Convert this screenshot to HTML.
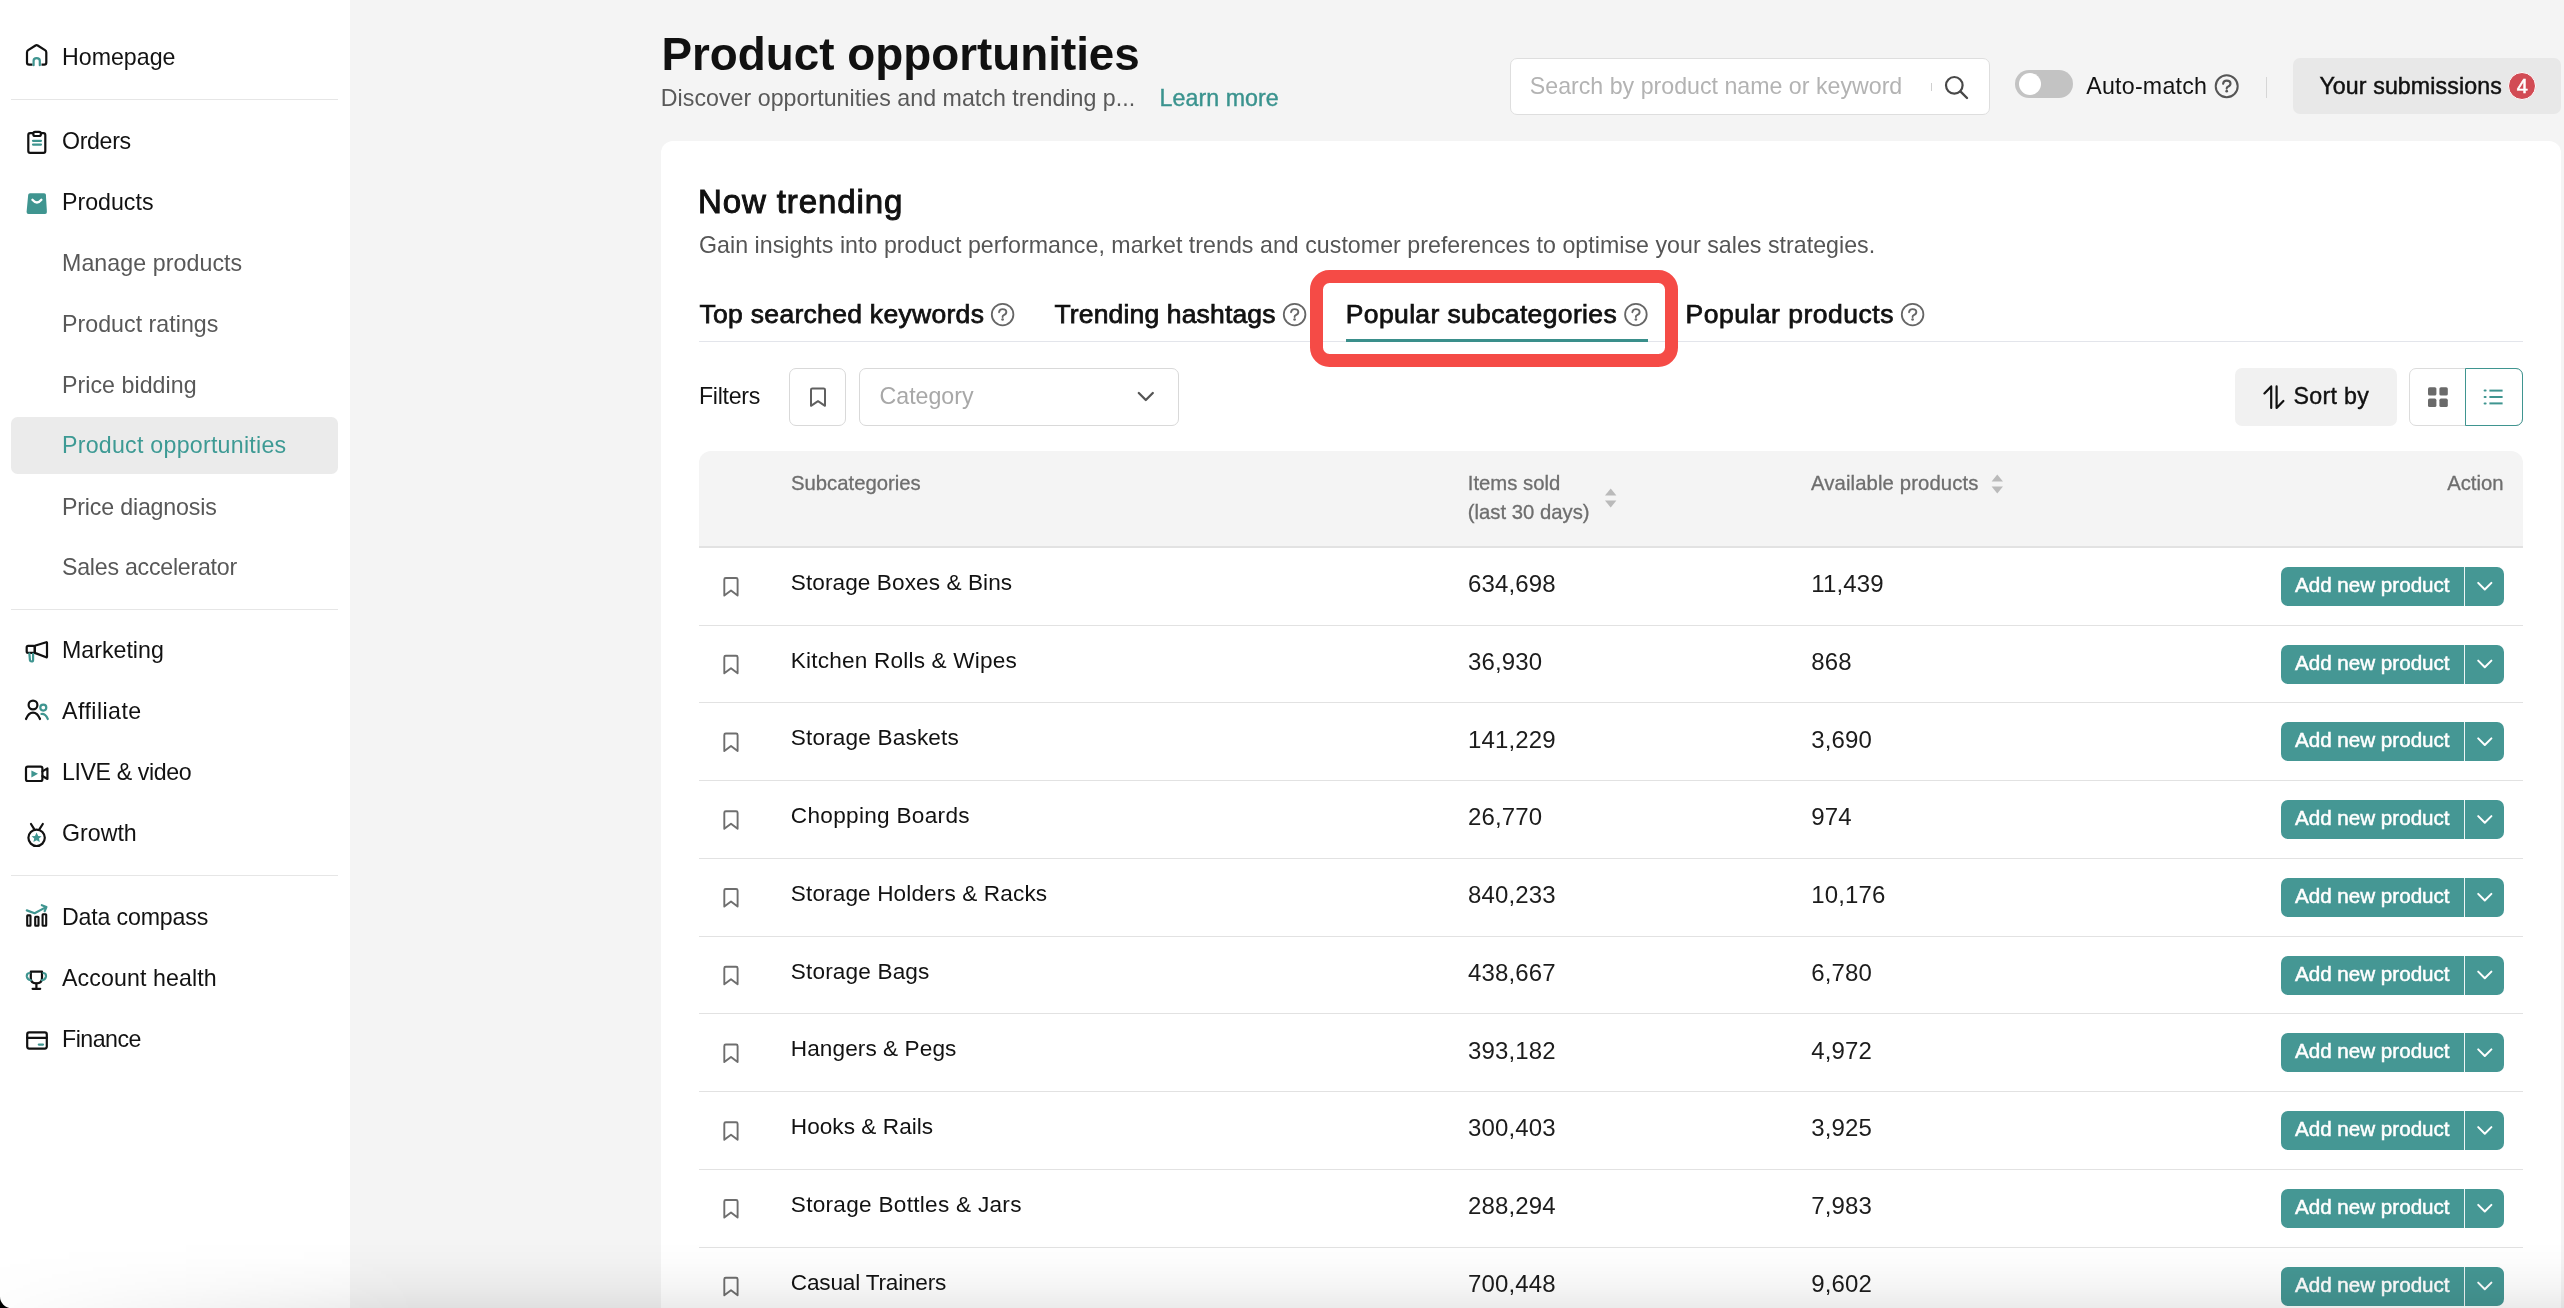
<!DOCTYPE html>
<html><head><meta charset="utf-8"><title>Product opportunities</title>
<style>
html,body{margin:0;padding:0;}
body{width:2564px;height:1308px;overflow:hidden;position:relative;background:#f4f4f4;font-family:"Liberation Sans",sans-serif;}
.t{position:absolute;white-space:nowrap;}
body>div.t, body>div.r{}
.wrap{position:absolute;left:0;top:0;width:2564px;height:1308px;will-change:transform;}
.r{position:absolute;}
svg.ov{position:absolute;left:0;top:0;width:2564px;height:1308px;pointer-events:none;}
.shade{position:absolute;left:0;top:1242px;width:2564px;height:66px;pointer-events:none;
 background:linear-gradient(to bottom, rgba(0,0,0,0) 0%, rgba(0,0,0,0.012) 30%, rgba(0,0,0,0.04) 68%, rgba(0,0,0,0.08) 100%);
 -webkit-mask-image:linear-gradient(to right, rgba(0,0,0,0.1) 0px, rgba(0,0,0,1) 420px);}
</style></head>
<body>
<div class="wrap"><div class="r" style="left:0px;top:0px;width:350.00px;height:1308.00px;background:#fff;"></div>
<div class="r" style="left:11px;top:98.5px;width:327.00px;height:1.60px;background:#e6e6e6;"></div>
<div class="r" style="left:11px;top:608.5px;width:327.00px;height:1.60px;background:#e6e6e6;"></div>
<div class="r" style="left:11px;top:874.5px;width:327.00px;height:1.60px;background:#e6e6e6;"></div>
<div class="r" style="left:11px;top:416.8px;width:327.00px;height:57.10px;background:#ebebeb;border-radius:6.5px;"></div>
<div class="t" style="left:62px;top:46.16px;font-size:23.2px;line-height:23.2px;color:#121212;font-weight:400;">Homepage</div>
<div class="t" style="left:62px;top:130.16px;font-size:23.2px;line-height:23.2px;color:#121212;font-weight:400;letter-spacing:-0.35px;">Orders</div>
<div class="t" style="left:62px;top:191.16px;font-size:23.2px;line-height:23.2px;color:#121212;font-weight:400;">Products</div>
<div class="t" style="left:62px;top:252.16px;font-size:23.2px;line-height:23.2px;color:#585858;font-weight:400;letter-spacing:0.07px;">Manage products</div>
<div class="t" style="left:62px;top:312.66px;font-size:23.2px;line-height:23.2px;color:#585858;font-weight:400;letter-spacing:0.03px;">Product ratings</div>
<div class="t" style="left:62px;top:373.66px;font-size:23.2px;line-height:23.2px;color:#585858;font-weight:400;letter-spacing:0.04px;">Price bidding</div>
<div class="t" style="left:62px;top:433.76px;font-size:23.2px;line-height:23.2px;color:#3d9a94;font-weight:400;letter-spacing:0.25px;">Product opportunities</div>
<div class="t" style="left:62px;top:495.66px;font-size:23.2px;line-height:23.2px;color:#585858;font-weight:400;letter-spacing:-0.18px;">Price diagnosis</div>
<div class="t" style="left:62px;top:556.16px;font-size:23.2px;line-height:23.2px;color:#585858;font-weight:400;letter-spacing:-0.25px;">Sales accelerator</div>
<div class="t" style="left:62px;top:639.16px;font-size:23.2px;line-height:23.2px;color:#121212;font-weight:400;">Marketing</div>
<div class="t" style="left:62px;top:700.16px;font-size:23.2px;line-height:23.2px;color:#121212;font-weight:400;letter-spacing:0.45px;">Affiliate</div>
<div class="t" style="left:62px;top:761.16px;font-size:23.2px;line-height:23.2px;color:#121212;font-weight:400;letter-spacing:-0.4px;">LIVE &amp; video</div>
<div class="t" style="left:62px;top:822.16px;font-size:23.2px;line-height:23.2px;color:#121212;font-weight:400;">Growth</div>
<div class="t" style="left:62px;top:906.16px;font-size:23.2px;line-height:23.2px;color:#121212;font-weight:400;letter-spacing:-0.18px;">Data compass</div>
<div class="t" style="left:62px;top:967.16px;font-size:23.2px;line-height:23.2px;color:#121212;font-weight:400;letter-spacing:0.1px;">Account health</div>
<div class="t" style="left:62px;top:1027.76px;font-size:23.2px;line-height:23.2px;color:#121212;font-weight:400;letter-spacing:-0.5px;">Finance</div>
<div class="t" style="left:661.5px;top:32.02px;font-size:45.8px;line-height:45.8px;color:#111;font-weight:700;">Product opportunities</div>
<div class="t" style="left:660.8px;top:86.96px;font-size:23.2px;line-height:23.2px;color:#595959;font-weight:400;letter-spacing:0.03px;">Discover opportunities and match trending p...</div>
<div class="t" style="left:1159.6px;top:86.96px;font-size:23.2px;line-height:23.2px;color:#3a938e;font-weight:400;-webkit-text-stroke:0.4px #3a938e;letter-spacing:0.05px;">Learn more</div>
<div class="r" style="left:1510.4px;top:58.3px;width:479.90px;height:56.30px;background:#fff;border:1.5px solid #dedede;border-radius:7px;box-sizing:border-box;"></div>
<div class="t" style="left:1529.8px;top:74.96px;font-size:23.2px;line-height:23.2px;color:#b3b3b3;font-weight:400;">Search by product name or keyword</div>
<div class="r" style="left:1930.5px;top:83px;width:1.10px;height:8.00px;background:#cfcfcf;"></div>
<div class="r" style="left:2015px;top:70.2px;width:57.80px;height:27.60px;background:#c3c3c3;border-radius:14px;"></div>
<div class="r" style="left:2018.6px;top:73.2px;width:22.00px;height:22.00px;background:#fff;border-radius:50%;"></div>
<div class="t" style="left:2086.2px;top:74.96px;font-size:23.2px;line-height:23.2px;color:#121212;font-weight:400;letter-spacing:0.25px;">Auto-match</div>
<div class="r" style="left:2265.8px;top:76.5px;width:1.40px;height:21.50px;background:#d6d6d6;"></div>
<div class="r" style="left:2293px;top:58.3px;width:268.00px;height:55.80px;background:#e8e8e8;border-radius:7px;"></div>
<div class="t" style="left:2319.4px;top:74.76px;font-size:23.2px;line-height:23.2px;color:#111;font-weight:400;-webkit-text-stroke:0.45px #111;letter-spacing:0.1px;">Your submissions</div>
<div class="r" style="left:2508px;top:72.3px;width:28.00px;height:28.00px;background:#d24b54;border-radius:50%;border:1.6px solid #fff;box-sizing:border-box;"></div>
<div class="t" style="left:2522.2px;top:76.27px;font-size:20px;line-height:20px;color:#fff;font-weight:0;-webkit-text-stroke:0.5px #fff;transform:translateX(-50%);">4</div>
<div class="r" style="left:661px;top:141px;width:1900.00px;height:1259.00px;background:#fff;border-radius:12px 12px 0 0;"></div>
<div class="t" style="left:698px;top:184.86px;font-size:33px;line-height:33px;color:#111;font-weight:400;-webkit-text-stroke:1.0px #111;letter-spacing:0.9px;">Now trending</div>
<div class="t" style="left:699px;top:234.06px;font-size:23.2px;line-height:23.2px;color:#555;font-weight:400;letter-spacing:0.03px;">Gain insights into product performance, market trends and customer preferences to optimise your sales strategies.</div>
<div class="r" style="left:699px;top:341px;width:1823.60px;height:1.10px;background:#e3e5eb;"></div>
<div class="t" style="left:699.5px;top:301.36px;font-size:26.5px;line-height:26.5px;color:#111;font-weight:400;-webkit-text-stroke:0.75px #111;letter-spacing:0.3px;">Top searched keywords</div>
<div class="t" style="left:1054.5px;top:301.36px;font-size:26.5px;line-height:26.5px;color:#111;font-weight:400;-webkit-text-stroke:0.75px #111;letter-spacing:0.15px;">Trending hashtags</div>
<div class="t" style="left:1345.8px;top:301.36px;font-size:26.5px;line-height:26.5px;color:#111;font-weight:400;-webkit-text-stroke:0.75px #111;letter-spacing:0.36px;">Popular subcategories</div>
<div class="t" style="left:1685.6px;top:301.36px;font-size:26.5px;line-height:26.5px;color:#111;font-weight:400;-webkit-text-stroke:0.75px #111;letter-spacing:0.5px;">Popular products</div>
<div class="r" style="left:1345.8px;top:339.1px;width:302.20px;height:2.80px;background:#3a8f8b;"></div>
<div class="r" style="left:1309.5px;top:270.3px;width:368.20px;height:97.10px;border:13px solid #f54b46;border-radius:19.5px;box-sizing:border-box;"></div>
<div class="t" style="left:699px;top:385.26px;font-size:23.2px;line-height:23.2px;color:#121212;font-weight:400;letter-spacing:-0.3px;">Filters</div>
<div class="r" style="left:789.2px;top:368.2px;width:56.60px;height:57.60px;border:1.5px solid #d9d9d9;border-radius:7px;box-sizing:border-box;"></div>
<div class="r" style="left:859.3px;top:368.2px;width:319.70px;height:57.60px;border:1.5px solid #d9d9d9;border-radius:7px;box-sizing:border-box;"></div>
<div class="t" style="left:879.5px;top:385.26px;font-size:23.2px;line-height:23.2px;color:#a8a8a8;font-weight:400;">Category</div>
<div class="r" style="left:2235px;top:368.3px;width:161.80px;height:57.50px;background:#f1f1f1;border-radius:7px;"></div>
<div class="t" style="left:2293.5px;top:385.06px;font-size:23.2px;line-height:23.2px;color:#111;font-weight:400;-webkit-text-stroke:0.4px #111;letter-spacing:0.3px;">Sort by</div>
<div class="r" style="left:2409.4px;top:368.3px;width:113.20px;height:57.50px;border:1.5px solid #dcdcdc;border-radius:7px;box-sizing:border-box;"></div>
<div class="r" style="left:2465.3px;top:368.3px;width:57.30px;height:57.50px;border:1.5px solid #3f9590;border-radius:0 7px 7px 0;box-sizing:border-box;"></div>
<div class="r" style="left:699px;top:451px;width:1823.60px;height:96.40px;background:#f4f4f4;border-radius:12px 12px 0 0;"></div>
<div class="r" style="left:699px;top:546.4px;width:1823.60px;height:1.60px;background:#e2e2e2;"></div>
<div class="t" style="left:791px;top:472.81px;font-size:20.3px;line-height:20.3px;color:#6e6e6e;font-weight:400;-webkit-text-stroke:0.3px #6e6e6e;">Subcategories</div>
<div class="t" style="left:1467.8px;top:472.81px;font-size:20.3px;line-height:20.3px;color:#6e6e6e;font-weight:400;-webkit-text-stroke:0.3px #6e6e6e;">Items sold</div>
<div class="t" style="left:1467.8px;top:502.21px;font-size:20.3px;line-height:20.3px;color:#6e6e6e;font-weight:400;-webkit-text-stroke:0.3px #6e6e6e;">(last 30 days)</div>
<div class="t" style="left:1811px;top:472.81px;font-size:20.3px;line-height:20.3px;color:#6e6e6e;font-weight:400;-webkit-text-stroke:0.3px #6e6e6e;letter-spacing:0.12px;">Available products</div>
<div class="t" style="right:60.5px;top:472.81px;font-size:20.3px;line-height:20.3px;color:#6e6e6e;font-weight:400;-webkit-text-stroke:0.3px #6e6e6e;">Action</div>
<div class="r" style="left:699px;top:624.65px;width:1823.60px;height:1.10px;background:#e2e2e2;"></div>
<div class="t" style="left:790.8px;top:571.96px;font-size:22.6px;line-height:22.6px;color:#121212;font-weight:400;letter-spacing:0.08px;">Storage Boxes &amp; Bins</div>
<div class="t" style="left:1468px;top:572.08px;font-size:24px;line-height:24px;color:#1c1c1c;font-weight:400;letter-spacing:0.15px;">634,698</div>
<div class="t" style="left:1811.2px;top:572.08px;font-size:24px;line-height:24px;color:#1c1c1c;font-weight:400;letter-spacing:0.15px;">11,439</div>
<div class="r" style="left:2281px;top:566.9px;width:223.00px;height:39.00px;background:#459794;border-radius:7px;"></div>
<div class="r" style="left:2463.8px;top:566.9px;width:1.40px;height:39.00px;background:#fff;opacity:0.9;"></div>
<div class="t" style="left:2295px;top:574.86px;font-size:20.6px;line-height:20.6px;color:#fff;font-weight:400;-webkit-text-stroke:0.5px #fff;">Add new product</div>
<div class="r" style="left:699px;top:702.4px;width:1823.60px;height:1.10px;background:#e2e2e2;"></div>
<div class="t" style="left:790.8px;top:649.71px;font-size:22.6px;line-height:22.6px;color:#121212;font-weight:400;letter-spacing:0.19px;">Kitchen Rolls &amp; Wipes</div>
<div class="t" style="left:1468px;top:649.83px;font-size:24px;line-height:24px;color:#1c1c1c;font-weight:400;letter-spacing:0.15px;">36,930</div>
<div class="t" style="left:1811.2px;top:649.83px;font-size:24px;line-height:24px;color:#1c1c1c;font-weight:400;letter-spacing:0.15px;">868</div>
<div class="r" style="left:2281px;top:644.65px;width:223.00px;height:39.00px;background:#459794;border-radius:7px;"></div>
<div class="r" style="left:2463.8px;top:644.65px;width:1.40px;height:39.00px;background:#fff;opacity:0.9;"></div>
<div class="t" style="left:2295px;top:652.61px;font-size:20.6px;line-height:20.6px;color:#fff;font-weight:400;-webkit-text-stroke:0.5px #fff;">Add new product</div>
<div class="r" style="left:699px;top:780.15px;width:1823.60px;height:1.10px;background:#e2e2e2;"></div>
<div class="t" style="left:790.8px;top:727.46px;font-size:22.6px;line-height:22.6px;color:#121212;font-weight:400;letter-spacing:0.16px;">Storage Baskets</div>
<div class="t" style="left:1468px;top:727.58px;font-size:24px;line-height:24px;color:#1c1c1c;font-weight:400;letter-spacing:0.15px;">141,229</div>
<div class="t" style="left:1811.2px;top:727.58px;font-size:24px;line-height:24px;color:#1c1c1c;font-weight:400;letter-spacing:0.15px;">3,690</div>
<div class="r" style="left:2281px;top:722.4px;width:223.00px;height:39.00px;background:#459794;border-radius:7px;"></div>
<div class="r" style="left:2463.8px;top:722.4px;width:1.40px;height:39.00px;background:#fff;opacity:0.9;"></div>
<div class="t" style="left:2295px;top:730.36px;font-size:20.6px;line-height:20.6px;color:#fff;font-weight:400;-webkit-text-stroke:0.5px #fff;">Add new product</div>
<div class="r" style="left:699px;top:857.9px;width:1823.60px;height:1.10px;background:#e2e2e2;"></div>
<div class="t" style="left:790.8px;top:805.21px;font-size:22.6px;line-height:22.6px;color:#121212;font-weight:400;letter-spacing:0.3px;">Chopping Boards</div>
<div class="t" style="left:1468px;top:805.33px;font-size:24px;line-height:24px;color:#1c1c1c;font-weight:400;letter-spacing:0.15px;">26,770</div>
<div class="t" style="left:1811.2px;top:805.33px;font-size:24px;line-height:24px;color:#1c1c1c;font-weight:400;letter-spacing:0.15px;">974</div>
<div class="r" style="left:2281px;top:800.15px;width:223.00px;height:39.00px;background:#459794;border-radius:7px;"></div>
<div class="r" style="left:2463.8px;top:800.15px;width:1.40px;height:39.00px;background:#fff;opacity:0.9;"></div>
<div class="t" style="left:2295px;top:808.11px;font-size:20.6px;line-height:20.6px;color:#fff;font-weight:400;-webkit-text-stroke:0.5px #fff;">Add new product</div>
<div class="r" style="left:699px;top:935.65px;width:1823.60px;height:1.10px;background:#e2e2e2;"></div>
<div class="t" style="left:790.8px;top:882.96px;font-size:22.6px;line-height:22.6px;color:#121212;font-weight:400;letter-spacing:0.12px;">Storage Holders &amp; Racks</div>
<div class="t" style="left:1468px;top:883.08px;font-size:24px;line-height:24px;color:#1c1c1c;font-weight:400;letter-spacing:0.15px;">840,233</div>
<div class="t" style="left:1811.2px;top:883.08px;font-size:24px;line-height:24px;color:#1c1c1c;font-weight:400;letter-spacing:0.15px;">10,176</div>
<div class="r" style="left:2281px;top:877.9px;width:223.00px;height:39.00px;background:#459794;border-radius:7px;"></div>
<div class="r" style="left:2463.8px;top:877.9px;width:1.40px;height:39.00px;background:#fff;opacity:0.9;"></div>
<div class="t" style="left:2295px;top:885.86px;font-size:20.6px;line-height:20.6px;color:#fff;font-weight:400;-webkit-text-stroke:0.5px #fff;">Add new product</div>
<div class="r" style="left:699px;top:1013.4px;width:1823.60px;height:1.10px;background:#e2e2e2;"></div>
<div class="t" style="left:790.8px;top:960.71px;font-size:22.6px;line-height:22.6px;color:#121212;font-weight:400;letter-spacing:0.15px;">Storage Bags</div>
<div class="t" style="left:1468px;top:960.83px;font-size:24px;line-height:24px;color:#1c1c1c;font-weight:400;letter-spacing:0.15px;">438,667</div>
<div class="t" style="left:1811.2px;top:960.83px;font-size:24px;line-height:24px;color:#1c1c1c;font-weight:400;letter-spacing:0.15px;">6,780</div>
<div class="r" style="left:2281px;top:955.65px;width:223.00px;height:39.00px;background:#459794;border-radius:7px;"></div>
<div class="r" style="left:2463.8px;top:955.65px;width:1.40px;height:39.00px;background:#fff;opacity:0.9;"></div>
<div class="t" style="left:2295px;top:963.61px;font-size:20.6px;line-height:20.6px;color:#fff;font-weight:400;-webkit-text-stroke:0.5px #fff;">Add new product</div>
<div class="r" style="left:699px;top:1091.15px;width:1823.60px;height:1.10px;background:#e2e2e2;"></div>
<div class="t" style="left:790.8px;top:1038.46px;font-size:22.6px;line-height:22.6px;color:#121212;font-weight:400;letter-spacing:0.08px;">Hangers &amp; Pegs</div>
<div class="t" style="left:1468px;top:1038.58px;font-size:24px;line-height:24px;color:#1c1c1c;font-weight:400;letter-spacing:0.15px;">393,182</div>
<div class="t" style="left:1811.2px;top:1038.58px;font-size:24px;line-height:24px;color:#1c1c1c;font-weight:400;letter-spacing:0.15px;">4,972</div>
<div class="r" style="left:2281px;top:1033.4px;width:223.00px;height:39.00px;background:#459794;border-radius:7px;"></div>
<div class="r" style="left:2463.8px;top:1033.4px;width:1.40px;height:39.00px;background:#fff;opacity:0.9;"></div>
<div class="t" style="left:2295px;top:1041.36px;font-size:20.6px;line-height:20.6px;color:#fff;font-weight:400;-webkit-text-stroke:0.5px #fff;">Add new product</div>
<div class="r" style="left:699px;top:1168.9px;width:1823.60px;height:1.10px;background:#e2e2e2;"></div>
<div class="t" style="left:790.8px;top:1116.21px;font-size:22.6px;line-height:22.6px;color:#121212;font-weight:400;letter-spacing:0.04px;">Hooks &amp; Rails</div>
<div class="t" style="left:1468px;top:1116.33px;font-size:24px;line-height:24px;color:#1c1c1c;font-weight:400;letter-spacing:0.15px;">300,403</div>
<div class="t" style="left:1811.2px;top:1116.33px;font-size:24px;line-height:24px;color:#1c1c1c;font-weight:400;letter-spacing:0.15px;">3,925</div>
<div class="r" style="left:2281px;top:1111.15px;width:223.00px;height:39.00px;background:#459794;border-radius:7px;"></div>
<div class="r" style="left:2463.8px;top:1111.15px;width:1.40px;height:39.00px;background:#fff;opacity:0.9;"></div>
<div class="t" style="left:2295px;top:1119.11px;font-size:20.6px;line-height:20.6px;color:#fff;font-weight:400;-webkit-text-stroke:0.5px #fff;">Add new product</div>
<div class="r" style="left:699px;top:1246.65px;width:1823.60px;height:1.10px;background:#e2e2e2;"></div>
<div class="t" style="left:790.8px;top:1193.96px;font-size:22.6px;line-height:22.6px;color:#121212;font-weight:400;letter-spacing:0.28px;">Storage Bottles &amp; Jars</div>
<div class="t" style="left:1468px;top:1194.08px;font-size:24px;line-height:24px;color:#1c1c1c;font-weight:400;letter-spacing:0.15px;">288,294</div>
<div class="t" style="left:1811.2px;top:1194.08px;font-size:24px;line-height:24px;color:#1c1c1c;font-weight:400;letter-spacing:0.15px;">7,983</div>
<div class="r" style="left:2281px;top:1188.9px;width:223.00px;height:39.00px;background:#459794;border-radius:7px;"></div>
<div class="r" style="left:2463.8px;top:1188.9px;width:1.40px;height:39.00px;background:#fff;opacity:0.9;"></div>
<div class="t" style="left:2295px;top:1196.86px;font-size:20.6px;line-height:20.6px;color:#fff;font-weight:400;-webkit-text-stroke:0.5px #fff;">Add new product</div>
<div class="t" style="left:790.8px;top:1271.71px;font-size:22.6px;line-height:22.6px;color:#121212;font-weight:400;letter-spacing:-0.19px;">Casual Trainers</div>
<div class="t" style="left:1468px;top:1271.83px;font-size:24px;line-height:24px;color:#1c1c1c;font-weight:400;letter-spacing:0.15px;">700,448</div>
<div class="t" style="left:1811.2px;top:1271.83px;font-size:24px;line-height:24px;color:#1c1c1c;font-weight:400;letter-spacing:0.15px;">9,602</div>
<div class="r" style="left:2281px;top:1266.65px;width:223.00px;height:39.00px;background:#459794;border-radius:7px;"></div>
<div class="r" style="left:2463.8px;top:1266.65px;width:1.40px;height:39.00px;background:#fff;opacity:0.9;"></div>
<div class="t" style="left:2295px;top:1274.61px;font-size:20.6px;line-height:20.6px;color:#fff;font-weight:400;-webkit-text-stroke:0.5px #fff;">Add new product</div>
<svg class="ov" viewBox="0 0 2564 1308"><path d="M27 57 V52.5 Q27 51 28.2 50.2 L35.5 45.5 Q36.6 44.8 37.7 45.5 L45 50.2 Q46.3 51 46.3 52.5 V62.5 Q46.3 64.6 44.2 64.6 H29.2 Q27 64.6 27 62.5 Z" stroke="#111" stroke-width="2.2" fill="none" stroke-linejoin="round" stroke-linecap="round"/><rect x="32.5" y="60" width="9" height="6" fill="#fff"/><path d="M33.6 65.2 V60.8 Q33.6 58.2 36.6 58.2 Q39.8 58.2 39.8 60.8 V65.2" stroke="#3f9590" stroke-width="2.2" fill="none" stroke-linejoin="round" stroke-linecap="round"/><rect x="28.3" y="133.2" width="17" height="19.6" rx="1.8" stroke="#111" stroke-width="2.2" fill="none" stroke-linejoin="round" stroke-linecap="round"/><rect x="33.3" y="131.8" width="7.6" height="4.2" rx="1.8" fill="#fff" stroke="#111" stroke-width="2.2" fill="none" stroke-linejoin="round" stroke-linecap="round"/><path d="M33 140.8 H41 M33 144.6 H41" stroke="#3f9590" stroke-width="2.2" fill="none" stroke-linejoin="round" stroke-linecap="round"/><path d="M28.2 194.8 Q28.4 193.3 30 193.3 H44.2 Q45.8 193.3 45.9 194.8 L46.9 212 Q47 214 45 214 H28.5 Q26.5 214 26.6 212 Z" fill="#3f9590"/><path d="M32.4 199.8 Q37 205.2 41.4 199.8" stroke="#fff" stroke-width="2.3" fill="none" stroke-linecap="round"/><rect x="26.7" y="645.8" width="8.1" height="7.1" rx="1.4" stroke="#111" stroke-width="2.2" fill="none" stroke-linejoin="round" stroke-linecap="round"/><path d="M34.8 645.8 L46.2 642.2 Q47 642 47 642.9 V656.7 Q47 657.5 46.2 657.2 L34.8 652.9 Z" stroke="#111" stroke-width="2.2" fill="none" stroke-linejoin="round" stroke-linecap="round"/><path d="M29.4 653.6 L29.9 660 Q30.1 661.5 31.6 661.5 Q33.1 661.5 33.1 660 V653.8" stroke="#3f9590" stroke-width="2.2" fill="none" stroke-linejoin="round" stroke-linecap="round"/><circle cx="33" cy="705" r="4.4" stroke="#111" stroke-width="2.2" fill="none" stroke-linejoin="round" stroke-linecap="round"/><path d="M26 719 Q28.5 712.6 33 712.6 Q37.5 712.6 40 719" stroke="#111" stroke-width="2.2" fill="none" stroke-linejoin="round" stroke-linecap="round"/><circle cx="43.3" cy="707.6" r="3" stroke="#3f9590" stroke-width="2.2" fill="none" stroke-linejoin="round" stroke-linecap="round"/><path d="M41.4 714 Q45.5 713.6 47.8 719" stroke="#3f9590" stroke-width="2.2" fill="none" stroke-linejoin="round" stroke-linecap="round"/><rect x="26" y="766.6" width="16.4" height="14.4" rx="1.8" stroke="#111" stroke-width="2.2" fill="none" stroke-linejoin="round" stroke-linecap="round"/><path d="M42.4 771.4 L47.4 768.4 V779 L42.4 776" stroke="#111" stroke-width="2.2" fill="none" stroke-linejoin="round" stroke-linecap="round"/><path d="M31.4 770.4 L38 773.8 L31.4 777.4 Z" fill="#3f9590"/><circle cx="36.6" cy="837.8" r="8.2" stroke="#111" stroke-width="2.2" fill="none" stroke-linejoin="round" stroke-linecap="round"/><path d="M31 824 L34.5 829.6 M42.8 824 L39.2 829.6" stroke="#111" stroke-width="2.2" fill="none" stroke-linejoin="round" stroke-linecap="round"/><path d="M36.6 832.6 L38.2 836 L41.6 836.3 L39 838.6 L39.8 842 L36.6 840.2 L33.4 842 L34.2 838.6 L31.6 836.3 L35 836 Z" fill="#3f9590"/><path d="M26.8 910.4 L34.6 913.2 L45.6 907.4" stroke="#3f9590" stroke-width="2.2" fill="none" stroke-linejoin="round" stroke-linecap="round"/><path d="M41.8 905.2 L46.4 907 L44.6 911.2" stroke="#3f9590" stroke-width="2.2" fill="none" stroke-linejoin="round" stroke-linecap="round"/><rect x="27.2" y="915.4" width="3.3" height="10.4" rx="0.5" stroke="#111" stroke-width="2.1" fill="none"/><rect x="35.2" y="916.8" width="3.3" height="9.0" rx="0.5" stroke="#111" stroke-width="2.1" fill="none"/><rect x="42.6" y="914.3" width="3.6" height="11.5" rx="0.5" stroke="#111" stroke-width="2.1" fill="none"/><path d="M30.8 971.6 H42 V978 Q42 983.4 36.4 983.4 Q30.8 983.4 30.8 978 Z" stroke="#111" stroke-width="2.2" fill="none" stroke-linejoin="round" stroke-linecap="round"/><path d="M36.4 983.6 V988.4 M32.6 988.8 H40.2" stroke="#111" stroke-width="2.2" fill="none" stroke-linejoin="round" stroke-linecap="round"/><path d="M29.4 973 Q26.6 973.2 26.8 976.4 Q27.2 979.6 30.8 980.2 M43.4 973 Q46.2 973.2 46 976.4 Q45.6 979.6 42 980.2" stroke="#3f9590" stroke-width="2.2" fill="none" stroke-linejoin="round" stroke-linecap="round"/><rect x="27.2" y="1032.4" width="19.6" height="16.2" rx="2" stroke="#111" stroke-width="2.2" fill="none" stroke-linejoin="round" stroke-linecap="round"/><path d="M27.2 1037.8 H46.8" stroke="#111" stroke-width="2.2" fill="none" stroke-linejoin="round" stroke-linecap="round"/><path d="M38.8 1044.6 H43" stroke="#3f9590" stroke-width="2.2" fill="none" stroke-linejoin="round" stroke-linecap="round"/><circle cx="1954.3" cy="85.3" r="8.3" stroke="#484848" stroke-width="2.2" fill="none"/><path d="M1960.4 91.4 L1967 98" stroke="#484848" stroke-width="2.4" stroke-linecap="round"/><circle cx="2226.7" cy="86.2" r="11" stroke="#555" stroke-width="2.0" fill="none"/><path d="M2223.10 83.80 Q2223.50 80.60 2226.70 80.60 Q2230.50 80.60 2230.50 83.60 Q2230.50 85.80 2227.90 86.80 Q2226.70 87.30 2226.70 88.40 V88.60" stroke="#555" stroke-width="2.10" fill="none" stroke-linecap="round" stroke-linejoin="round"/><circle cx="2226.7" cy="91.20" r="1.35" fill="#555"/><circle cx="1002.6" cy="314.6" r="10.8" stroke="#666" stroke-width="1.8" fill="none"/><path d="M999.07 312.24 Q999.46 309.10 1002.60 309.10 Q1006.33 309.10 1006.33 312.05 Q1006.33 314.21 1003.78 315.19 Q1002.60 315.68 1002.60 316.76 V316.96" stroke="#666" stroke-width="1.89" fill="none" stroke-linecap="round" stroke-linejoin="round"/><circle cx="1002.6" cy="319.51" r="1.33" fill="#666"/><circle cx="1294.6" cy="314.6" r="10.8" stroke="#666" stroke-width="1.8" fill="none"/><path d="M1291.07 312.24 Q1291.46 309.10 1294.60 309.10 Q1298.33 309.10 1298.33 312.05 Q1298.33 314.21 1295.78 315.19 Q1294.60 315.68 1294.60 316.76 V316.96" stroke="#666" stroke-width="1.89" fill="none" stroke-linecap="round" stroke-linejoin="round"/><circle cx="1294.6" cy="319.51" r="1.33" fill="#666"/><circle cx="1635.9" cy="314.6" r="10.8" stroke="#666" stroke-width="1.8" fill="none"/><path d="M1632.37 312.24 Q1632.76 309.10 1635.90 309.10 Q1639.63 309.10 1639.63 312.05 Q1639.63 314.21 1637.08 315.19 Q1635.90 315.68 1635.90 316.76 V316.96" stroke="#666" stroke-width="1.89" fill="none" stroke-linecap="round" stroke-linejoin="round"/><circle cx="1635.9" cy="319.51" r="1.33" fill="#666"/><circle cx="1912.6" cy="314.6" r="10.8" stroke="#666" stroke-width="1.8" fill="none"/><path d="M1909.07 312.24 Q1909.46 309.10 1912.60 309.10 Q1916.33 309.10 1916.33 312.05 Q1916.33 314.21 1913.78 315.19 Q1912.60 315.68 1912.60 316.76 V316.96" stroke="#666" stroke-width="1.89" fill="none" stroke-linecap="round" stroke-linejoin="round"/><circle cx="1912.6" cy="319.51" r="1.33" fill="#666"/><path d="M811 389.8 Q811 388.4 812.4 388.4 H823.6 Q825 388.4 825 389.8 V405.8 L818 401.2 L811 405.8 Z" stroke="#606060" stroke-width="2" fill="none" stroke-linejoin="round"/><path d="M1138.8 393 L1145.8 400 L1152.8 393" stroke="#555" stroke-width="2.3" fill="none" stroke-linecap="round" stroke-linejoin="round"/><path d="M2271.2 408 V386.4 L2264.4 393.4" stroke="#111" stroke-width="2.2" fill="none" stroke-linecap="round" stroke-linejoin="round"/><path d="M2276.6 386.4 V408 L2283.4 401" stroke="#111" stroke-width="2.2" fill="none" stroke-linecap="round" stroke-linejoin="round"/><rect x="2428" y="387.2" width="8.4" height="8.4" rx="1.6" fill="#6a6a6a"/><rect x="2428" y="398.6" width="8.4" height="8.4" rx="1.6" fill="#6a6a6a"/><rect x="2439.4" y="387.2" width="8.4" height="8.4" rx="1.6" fill="#6a6a6a"/><rect x="2439.4" y="398.6" width="8.4" height="8.4" rx="1.6" fill="#6a6a6a"/><path d="M2484.6 390.6 H2485.6" stroke="#3f9590" stroke-width="2" stroke-linecap="round"/><path d="M2489.4 390.6 H2502.6" stroke="#3f9590" stroke-width="2" stroke-linecap="butt"/><path d="M2484.6 397 H2485.6" stroke="#3f9590" stroke-width="2" stroke-linecap="round"/><path d="M2489.4 397 H2502.6" stroke="#3f9590" stroke-width="2" stroke-linecap="butt"/><path d="M2484.6 403.4 H2485.6" stroke="#3f9590" stroke-width="2" stroke-linecap="round"/><path d="M2489.4 403.4 H2502.6" stroke="#3f9590" stroke-width="2" stroke-linecap="butt"/><path d="M1605.0 495.4 L1610.7 488.4 L1616.4 495.4 Z" fill="#bababa"/><path d="M1605.0 500.6 L1610.7 507.6 L1616.4 500.6 Z" fill="#bababa"/><path d="M1991.6 481.4 L1997.3 474.4 L2003.0 481.4 Z" fill="#bababa"/><path d="M1991.6 486.6 L1997.3 493.6 L2003.0 486.6 Z" fill="#bababa"/><path d="M724.3 579.50 Q724.3 578.00 725.8 578.00 H736.1 Q737.6 578.00 737.6 579.50 V595.60 L731 590.40 L724.3 595.60 Z" stroke="#6e6e6e" stroke-width="1.9" fill="none" stroke-linejoin="round"/><path d="M2478.2 582.9 L2484.8 589.5 L2491.4 582.9" stroke="#fff" stroke-width="2" fill="none" stroke-linecap="round" stroke-linejoin="round"/><path d="M724.3 657.25 Q724.3 655.75 725.8 655.75 H736.1 Q737.6 655.75 737.6 657.25 V673.35 L731 668.15 L724.3 673.35 Z" stroke="#6e6e6e" stroke-width="1.9" fill="none" stroke-linejoin="round"/><path d="M2478.2 660.65 L2484.8 667.25 L2491.4 660.65" stroke="#fff" stroke-width="2" fill="none" stroke-linecap="round" stroke-linejoin="round"/><path d="M724.3 735.00 Q724.3 733.50 725.8 733.50 H736.1 Q737.6 733.50 737.6 735.00 V751.10 L731 745.90 L724.3 751.10 Z" stroke="#6e6e6e" stroke-width="1.9" fill="none" stroke-linejoin="round"/><path d="M2478.2 738.4 L2484.8 745.0 L2491.4 738.4" stroke="#fff" stroke-width="2" fill="none" stroke-linecap="round" stroke-linejoin="round"/><path d="M724.3 812.75 Q724.3 811.25 725.8 811.25 H736.1 Q737.6 811.25 737.6 812.75 V828.85 L731 823.65 L724.3 828.85 Z" stroke="#6e6e6e" stroke-width="1.9" fill="none" stroke-linejoin="round"/><path d="M2478.2 816.15 L2484.8 822.75 L2491.4 816.15" stroke="#fff" stroke-width="2" fill="none" stroke-linecap="round" stroke-linejoin="round"/><path d="M724.3 890.50 Q724.3 889.00 725.8 889.00 H736.1 Q737.6 889.00 737.6 890.50 V906.60 L731 901.40 L724.3 906.60 Z" stroke="#6e6e6e" stroke-width="1.9" fill="none" stroke-linejoin="round"/><path d="M2478.2 893.9 L2484.8 900.5 L2491.4 893.9" stroke="#fff" stroke-width="2" fill="none" stroke-linecap="round" stroke-linejoin="round"/><path d="M724.3 968.25 Q724.3 966.75 725.8 966.75 H736.1 Q737.6 966.75 737.6 968.25 V984.35 L731 979.15 L724.3 984.35 Z" stroke="#6e6e6e" stroke-width="1.9" fill="none" stroke-linejoin="round"/><path d="M2478.2 971.65 L2484.8 978.25 L2491.4 971.65" stroke="#fff" stroke-width="2" fill="none" stroke-linecap="round" stroke-linejoin="round"/><path d="M724.3 1046.00 Q724.3 1044.50 725.8 1044.50 H736.1 Q737.6 1044.50 737.6 1046.00 V1062.10 L731 1056.90 L724.3 1062.10 Z" stroke="#6e6e6e" stroke-width="1.9" fill="none" stroke-linejoin="round"/><path d="M2478.2 1049.4 L2484.8 1056.0 L2491.4 1049.4" stroke="#fff" stroke-width="2" fill="none" stroke-linecap="round" stroke-linejoin="round"/><path d="M724.3 1123.75 Q724.3 1122.25 725.8 1122.25 H736.1 Q737.6 1122.25 737.6 1123.75 V1139.85 L731 1134.65 L724.3 1139.85 Z" stroke="#6e6e6e" stroke-width="1.9" fill="none" stroke-linejoin="round"/><path d="M2478.2 1127.15 L2484.8 1133.75 L2491.4 1127.15" stroke="#fff" stroke-width="2" fill="none" stroke-linecap="round" stroke-linejoin="round"/><path d="M724.3 1201.50 Q724.3 1200.00 725.8 1200.00 H736.1 Q737.6 1200.00 737.6 1201.50 V1217.60 L731 1212.40 L724.3 1217.60 Z" stroke="#6e6e6e" stroke-width="1.9" fill="none" stroke-linejoin="round"/><path d="M2478.2 1204.9 L2484.8 1211.5 L2491.4 1204.9" stroke="#fff" stroke-width="2" fill="none" stroke-linecap="round" stroke-linejoin="round"/><path d="M724.3 1279.25 Q724.3 1277.75 725.8 1277.75 H736.1 Q737.6 1277.75 737.6 1279.25 V1295.35 L731 1290.15 L724.3 1295.35 Z" stroke="#6e6e6e" stroke-width="1.9" fill="none" stroke-linejoin="round"/><path d="M2478.2 1282.65 L2484.8 1289.25 L2491.4 1282.65" stroke="#fff" stroke-width="2" fill="none" stroke-linecap="round" stroke-linejoin="round"/></svg></div><div class="shade"></div><svg class="ov" viewBox="0 0 2564 1308"><path d="M0 1296.5 A11.5 11.5 0 0 0 11.5 1308 H0 Z" fill="#000"/></svg>
</body></html>
